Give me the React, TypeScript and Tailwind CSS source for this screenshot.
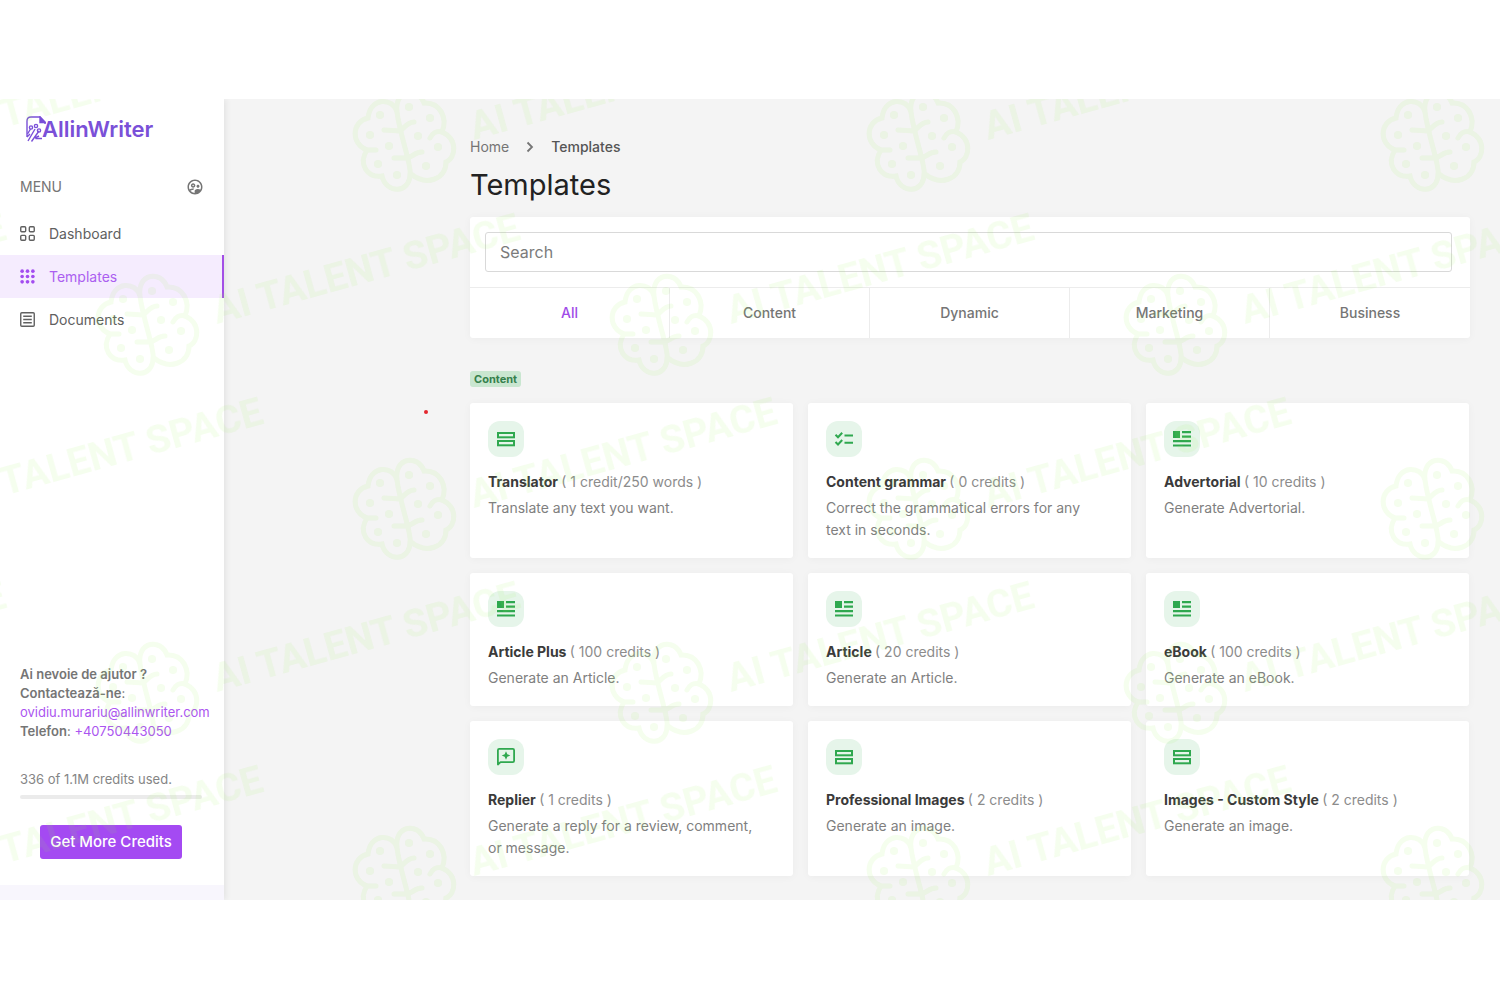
import { MdOutlineSupervisedUserCircle } from 'react-icons/md';

type IconName = 'rows' | 'check' | 'article' | 'reply';

const templates: { name: string; credits: string; text: string; icon: IconName }[] = [
  { name: 'Translator', credits: '1 credit/250 words', text: 'Translate any text you want.', icon: 'rows' },
  { name: 'Content grammar', credits: '0 credits', text: 'Correct the grammatical errors for any text in seconds.', icon: 'check' },
  { name: 'Advertorial', credits: '10 credits', text: 'Generate Advertorial.', icon: 'article' },
  { name: 'Article Plus', credits: '100 credits', text: 'Generate an Article.', icon: 'article' },
  { name: 'Article', credits: '20 credits', text: 'Generate an Article.', icon: 'article' },
  { name: 'eBook', credits: '100 credits', text: 'Generate an eBook.', icon: 'article' },
  { name: 'Replier', credits: '1 credits', text: 'Generate a reply for a review, comment, or message.', icon: 'reply' },
  { name: 'Professional Images', credits: '2 credits', text: 'Generate an image.', icon: 'rows' },
  { name: 'Images - Custom Style', credits: '2 credits', text: 'Generate an image.', icon: 'rows' },
];

const tabs = ['All', 'Content', 'Dynamic', 'Marketing', 'Business'];

function TemplateIcon({ name }: { name: IconName }) {
  if (name === 'check') {
    return (
      <svg width="20" height="20" viewBox="0 0 20 20" fill="none" stroke="currentColor" strokeWidth="2">
        <path d="M1.500 5.800l2.500 2.500 4.200-4.500M1.500 13l2.500 2.500 4.200-4.500M10.500 6.600H19M10.500 13.800H19" />
      </svg>
    );
  }
  if (name === 'rows') {
    return (
      <svg width="20" height="20" viewBox="0 0 20 20" fill="none" stroke="currentColor" strokeWidth="2">
        <rect x="2" y="4" width="16" height="4.300" />
        <rect x="2" y="12" width="16" height="4.300" />
      </svg>
    );
  }
  if (name === 'article') {
    return (
      <svg width="20" height="20" viewBox="0 0 20 20" fill="currentColor">
        <path d="M1 2h7v7H1zM10 2h9v2.2h-9zM10 6.6h9v2.2h-9zM1 11h18v2.2H1zM1 15.4h18v2.2H1z" />
      </svg>
    );
  }
  return (
    <svg width="20" height="20" viewBox="0 0 20 20" fill="none" stroke="currentColor" strokeWidth="1.8">
      <path d="M1.900 17.500V3.200c0-.8.5-1.300 1.300-1.300h13.600c.8 0 1.300.5 1.300 1.300v10.600c0 .8-.5 1.300-1.300 1.300H4.500z" strokeLinejoin="round" />
      <path d="M10 4.200l1.300 3 3 1.300-3 1.300-1.300 3-1.300-3-3-1.300 3-1.300z" fill="currentColor" stroke="none" />
    </svg>
  );
}

function Logo() {
  return (
    <a href="#" className="ml-[26px] mt-[16px] flex h-7 items-center text-[#7a50d8]">
      <svg width="20" height="27" viewBox="0 0 20 27" className="-mr-[4px]" fill="none" stroke="currentColor" strokeWidth="1.400">
        <path d="M1 21V5c0-2.500 1.500-4 4-4h9l5 5v2M16 22.500H9.500M1 21l3-3" />
        <path d="M14 1v5.500h5z" fill="currentColor" />
        <path d="M2 25l7-12M5.500 25.500L13 15M1.500 18l3-5M9 22l4-2" />
        <circle cx="5" cy="11.500" r="1.600" />
        <circle cx="10" cy="10" r="1.600" />
        <circle cx="13" cy="14.500" r="1.600" />
      </svg>
      <span className="text-[22px] font-semibold leading-7">AllinWriter</span>
    </a>
  );
}

function Sidebar() {
  const item = 'flex h-[43px] items-center gap-[14px] pl-5 text-sm';
  return (
    <aside className="relative flex w-56 shrink-0 flex-col bg-white shadow-[2px_0_6px_rgba(0,0,0,0.07)]">
      <Logo />
      <div className="mt-[34px] flex h-5 items-center justify-between pl-5 pr-5 text-[#757575]">
        <span className="text-sm">MENU</span>
        <MdOutlineSupervisedUserCircle size={18} />
      </div>
      <nav className="mt-[15px]">
        <a href="#" className={`${item} text-[#606060]`}>
          <svg width="15" height="15" viewBox="0 0 14 14" fill="none" stroke="currentColor" strokeWidth="1.3">
            <rect x=".7" y=".7" width="4.600" height="4.600" rx=".9" />
            <rect x="8.700" y=".7" width="4.600" height="4.600" rx=".9" />
            <rect x=".7" y="8.700" width="4.600" height="4.600" rx=".9" />
            <rect x="8.700" y="8.700" width="4.600" height="4.600" rx=".9" />
          </svg>
          Dashboard
        </a>
        <a href="#" className={`${item} border-r-2 border-[#a34fe6] bg-[#f5ecfe] text-[#ab5ff0]`}>
          <svg width="15" height="15" viewBox="0 0 14 14" fill="#a34cf0">
            {[2, 7, 12].map((y) => [2, 7, 12].map((x) => <circle key={`${x}-${y}`} cx={x} cy={y} r="1.700" />))}
          </svg>
          Templates
        </a>
        <a href="#" className={`${item} text-[#606060]`}>
          <svg width="15" height="15" viewBox="0 0 14 14" fill="none" stroke="currentColor" strokeWidth="1.3">
            <rect x=".7" y=".7" width="12.600" height="12.600" rx="1" />
            <path d="M3 4h8M3 7h8M3 10h8" />
          </svg>
          Documents
        </a>
      </nav>
      <div className="mt-auto px-5 text-[13px] leading-[19px] text-[#757575]">
        <p className="font-semibold">Ai nevoie de ajutor ?</p>
        <p><span className="font-semibold">Contactează-ne</span>:</p>
        <p><a href="mailto:ovidiu.murariu@allinwriter.com" className="text-[#ab55f0]">ovidiu.murariu@allinwriter.com</a></p>
        <p><span className="font-semibold">Telefon</span>: <a href="tel:+40750443050" className="text-[#ab55f0]">+40750443050</a></p>
        <p className="mt-[29px] text-[#858585]">336 of 1.1M credits used.</p>
        <div className="mr-[2px] mt-[6px] h-1 rounded-full bg-[#ebebeb]" />
      </div>
      <button className="mb-[26px] ml-[40px] mt-[26px] h-[34px] w-[142px] rounded-[3px] bg-[#a44af2] text-[15px] font-medium text-white">
        Get More Credits
      </button>
      <div className="h-[15px] bg-[#f8f6fd]" />
    </aside>
  );
}

// brain + wordmark repeated in a brick pattern over the whole screen
function Watermark() {
  const marks = [];
  for (let row = 0; row < 5; row++) {
    const odd = row % 2 === 1;
    for (let col = odd ? -1 : 0; col < 4; col++) {
      marks.push({ x: col * 514 - 164 + (odd ? 257 : 0), y: row * 184 - 13 });
    }
  }
  return (
    <svg className="pointer-events-none absolute inset-0 h-full w-full" aria-hidden="true">
      <defs>
        <g id="brain" fill="none" stroke="#9cf055" strokeWidth="5" strokeLinecap="round">
          <path d="M47 26C43 11 20 11 18 32C1 36 1 58 17 64C8 78 17 92 32 90C36 108 60 108 60 88C62 80 50 50 47 26C44 3 68 0 74 17C90 16 98 32 92 46C108 53 106 72 96 76C96 94 76 100 61 88" />
          <path d="M34 44L50 45C55 41 58 36 64 36M44 72L56 72C62 72 64 66 72 66M92 46C86 44 82 48 80 52M17 64H26" />
          <g fill="#9cf055" stroke="none">
            {[[30, 29], [20, 49], [39, 60], [28, 78], [47, 89], [59, 21], [80, 32], [68, 50], [88, 61], [76, 80]].map(([x, y]) => (
              <circle key={x} cx={x} cy={y} r="4" />
            ))}
          </g>
        </g>
      </defs>
      {marks.map((m, i) => (
        <g key={i} transform={`translate(${m.x} ${m.y})`} opacity="0.1">
          <use href="#brain" />
          <text
            transform="translate(124 54) rotate(-15.5)"
            fill="#9cf055"
            className="font-['Roboto','Liberation_Sans',sans-serif] text-[39px] font-bold"
          >
            AI TALENT SPACE
          </text>
        </g>
      ))}
    </svg>
  );
}

export default function App() {
  return (
    <div className="bg-white py-[99px] font-['Inter',sans-serif]">
      <div className="relative flex overflow-hidden bg-[#f4f4f4]">
        <Sidebar />
        <main className="min-w-0 flex-1 pb-6 pl-[246px] pr-[30px] pt-[38px]">
          <nav className="flex h-5 items-center gap-[17px] text-sm text-[#757575]">
            <a href="#">Home</a>
            <svg width="8" height="12" viewBox="0 0 8 12" fill="none" stroke="currentColor" strokeWidth="1.8">
              <path d="M1.500 1.500L6 6l-4.500 4.500" />
            </svg>
            <span className="font-medium text-[#555]">Templates</span>
          </nav>
          <h1 className="mt-[10px] text-[29px] leading-9 text-[#222]">Templates</h1>

          <section className="mt-[14px] rounded-[3px] bg-white shadow-[0_1px_8px_rgba(0,0,0,0.04)]">
            <div className="py-[15px] pl-[15px] pr-[18px]">
              <input
                type="text"
                aria-label="Search"
                placeholder="Search"
                className="block h-10 w-full rounded-[3px] border border-[#d9d9d9] px-[14px] text-base outline-none placeholder:text-[#7b7b7b]"
              />
            </div>
            <div className="grid grid-cols-5 divide-x divide-[#ececec] border-t border-[#ececec]">
              {tabs.map((tab) => (
                <button key={tab} className={`h-[50px] text-sm font-medium ${tab === 'All' ? 'text-[#a04be8]' : 'text-[#757575]'}`}>
                  {tab}
                </button>
              ))}
            </div>
          </section>

          <h2 className="mt-[33px] w-fit rounded-[3px] bg-[#c9e6d0] px-1 text-[11px] font-bold leading-4 text-[#35804c]">Content</h2>

          <div className="mt-4 grid grid-cols-3 gap-[15px] pr-px">
            {templates.map((t) => (
              <article key={t.name} className="rounded-[3px] bg-white px-[18px] pb-[17px] pt-[18px] shadow-[0_1px_8px_rgba(0,0,0,0.04)]">
                <div className="flex h-9 w-9 items-center justify-center rounded-xl bg-[#e6f5ea] text-[#2fa84f]">
                  <TemplateIcon name={t.icon} />
                </div>
                <h3 className="mt-[15px] text-sm font-bold leading-5 text-[#3a3a3a]">
                  {t.name} <span className="font-normal text-[#8c8c8c]">( {t.credits} )</span>
                </h3>
                <p className="mt-[5px] pr-4 text-sm leading-[22px] text-[#7f7f7f]">{t.text}</p>
              </article>
            ))}
          </div>
        </main>
        <span className="absolute left-[424px] top-[311px] h-1 w-1 rounded-full bg-[#e3262e]" />
        <Watermark />
      </div>
    </div>
  );
}
